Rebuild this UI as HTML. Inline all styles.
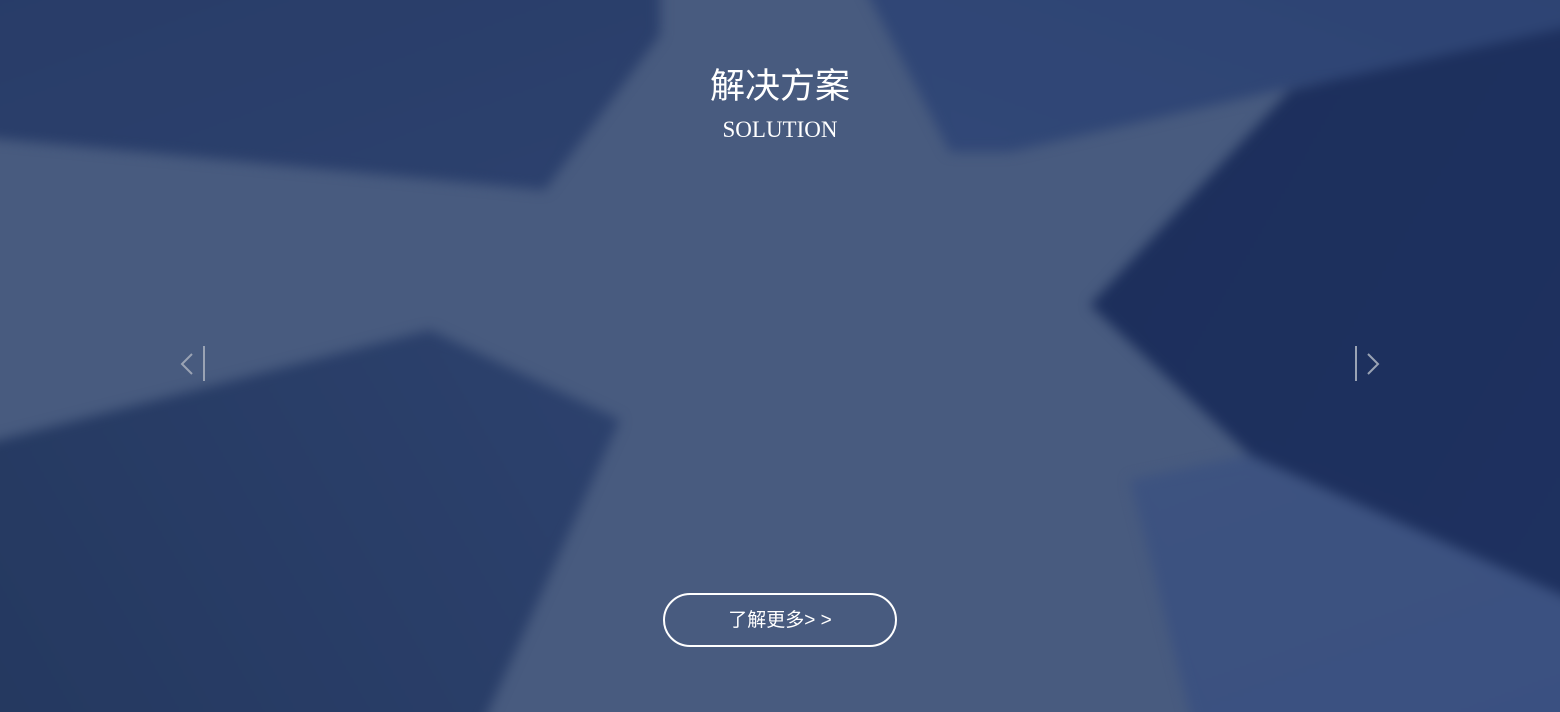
<!DOCTYPE html>
<html><head><meta charset="utf-8"><style>
html,body{margin:0;padding:0;width:1560px;height:712px;overflow:hidden;}
body{position:relative;background:#485b7f;font-family:"Liberation Serif","Noto Serif CJK SC",serif;}
.w{position:absolute;left:-40px;top:-40px;width:1640px;height:792px;filter:blur(6px);}
.b{position:absolute;left:0;top:0;width:100%;height:100%;}
.t{position:absolute;width:100%;text-align:center;color:#fff;}
</style></head><body>
<div style="position:absolute;left:0;top:0;width:1560px;height:712px;overflow:hidden;">
<div class="w">
<div class="b" style="background:linear-gradient(160deg,#283c68,#344a78);clip-path:polygon(0 0,700px 0,700px 75px,585px 230px,0 175px)"></div>
<div class="b" style="background:linear-gradient(200deg,#2d4373,#3a5180);clip-path:polygon(890px 0,1640px 0,1640px 70px,1320px 130px,1050px 192px,990px 192px)"></div>
<div class="b" style="background:linear-gradient(120deg,#2a3e6a,#1c2e5a 40%,#1e3160);clip-path:polygon(1330px 130px,1640px 60px,1640px 652px,1290px 495px,1130px 345px)"></div>
<div class="b" style="background:linear-gradient(60deg,#24385f,#2e4370 50%,#3d5280);clip-path:polygon(0 490px,470px 370px,660px 460px,510px 792px,0 792px)"></div>
<div class="b" style="background:linear-gradient(160deg,#44597f,#3a5081);clip-path:polygon(1170px 520px,1290px 495px,1640px 652px,1640px 792px,1240px 792px)"></div>
</div>
</div>
<div class="t" style="top:58px;font-size:35px;font-family:'Liberation Sans','Noto Sans CJK SC',sans-serif;">解决方案</div>
<div class="t" style="top:117px;font-size:23px;">SOLUTION</div>
<svg style="position:absolute;left:176px;top:344px" width="32" height="40"><polyline points="16,10 6,20 16,30" fill="none" stroke="#9aa3b4" stroke-width="2"/><line x1="28" y1="2" x2="28" y2="37" stroke="#9aa3b4" stroke-width="2"/></svg>
<svg style="position:absolute;left:1352px;top:344px" width="32" height="40"><polyline points="16,10 26,20 16,30" fill="none" stroke="#9aa3b4" stroke-width="2"/><line x1="4" y1="2" x2="4" y2="37" stroke="#9aa3b4" stroke-width="2"/></svg>
<div style="position:absolute;left:663px;top:593px;width:230px;height:50px;border:2px solid #fff;border-radius:27px;color:#fff;text-align:center;line-height:52px;font-size:19px;font-family:'Liberation Sans','Noto Sans CJK SC',sans-serif;">了解更多&gt; &gt;</div>
</body></html>
